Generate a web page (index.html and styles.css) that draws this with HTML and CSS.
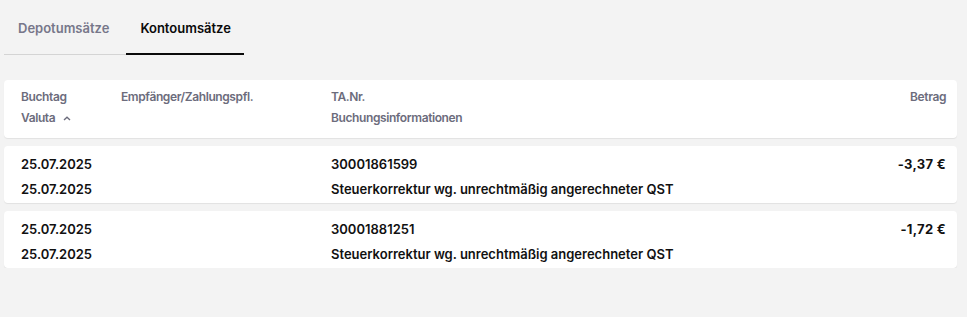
FILE: index.html
```html
<!DOCTYPE html>
<html lang="de">
<head>
<meta charset="utf-8">
<link rel="stylesheet" href="styles.css">
</head>
<body>
<div class="page">
  <nav class="tabs">
    <div class="tab">Depotumsätze</div>
    <div class="tab active">Kontoumsätze</div>
  </nav>
  <div class="table">
    <div class="card head">
      <div class="cell">
        <div>Buchtag</div>
        <div class="sort">Valuta <svg class="chev" width="8" height="5" viewBox="0 0 8 5"><path d="M1 4 L4 1.3 L7 4" fill="none" stroke="currentColor" stroke-width="1.4"/></svg></div>
      </div>
      <div class="cell"><div>Empfänger/Zahlungspfl.</div></div>
      <div class="cell">
        <div>TA.Nr.</div>
        <div>Buchungsinformationen</div>
      </div>
      <div class="cell right"><div>Betrag</div></div>
    </div>
    <div class="card row">
      <div class="cell"><div>25.07.2025</div><div>25.07.2025</div></div>
      <div class="cell"></div>
      <div class="cell"><div>30001861599</div><div>Steuerkorrektur wg. unrechtmäßig angerechneter QST</div></div>
      <div class="cell right"><div class="amount">-3,37 €</div></div>
    </div>
    <div class="card row">
      <div class="cell"><div>25.07.2025</div><div>25.07.2025</div></div>
      <div class="cell"></div>
      <div class="cell"><div>30001881251</div><div>Steuerkorrektur wg. unrechtmäßig angerechneter QST</div></div>
      <div class="cell right"><div class="amount">-1,72 €</div></div>
    </div>
  </div>
</div>
</body>
</html>
```
FILE: styles.css
```css
html, body {
  margin: 0;
  padding: 0;
  background: #f3f3f3;
  font-family: Inter, "Noto Sans", sans-serif;
  color: #111;
}
.page {
  padding: 0 10px 0 4px;
}
.tabs {
  display: flex;
  height: 55px;
}
.tab {
  padding: 20px 17px 0 14px;
  font-size: 13px;
  font-weight: 600;
  color: #77778a;
  border-bottom: 1px solid #d4d4d4;
  height: 34px;
}
.tab.active {
  color: #0a0a0a;
  border-bottom: 2px solid #0a0a0a;
  height: 33px;
  padding-right: 13px;
}
.table {
  margin-top: 25px;
  display: flex;
  flex-direction: column;
  gap: 8px;
}
.card {
  background: #fff;
  border-radius: 4px;
  box-shadow: 0 1px 1px rgba(0,0,0,0.07);
  display: grid;
  grid-template-columns: 100px 210px 1fr auto;
  padding: 0 11px 0 17px;
}
.cell {
  display: flex;
  flex-direction: column;
  gap: 5px;
}
.right { text-align: right; }
.head {
  padding-top: 9px;
  height: 49px;
  font-size: 12px;
  letter-spacing: -0.4px;
  font-weight: 600;
  color: #6c6c7c;
}
.head .cell div { line-height: 16px; }
.sort { display: flex; align-items: center; gap: 8px; }
.chev { margin-top: 1px; }
.row {
  padding-top: 10px;
  height: 47px;
  font-size: 13px;
  font-weight: 600;
}
.row .cell div { line-height: 16px; }
.row .cell { gap: 9px; }
.amount { font-weight: 700; letter-spacing: 0.3px; }
```
